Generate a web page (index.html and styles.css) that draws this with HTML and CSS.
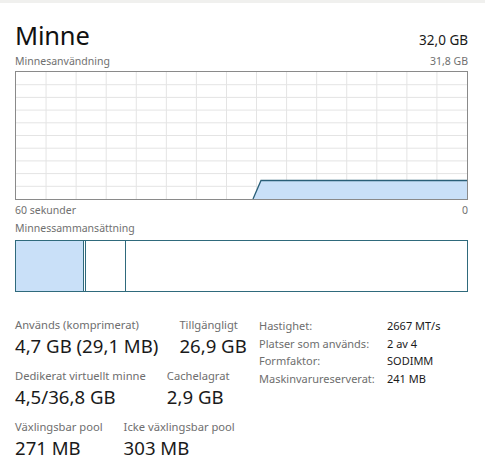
FILE: index.html
```html
<!DOCTYPE html>
<html lang="sv">
<head>
<meta charset="utf-8">
<link rel="stylesheet" href="styles.css">
</head>
<body>
<div class="topband"></div>
<main class="panel">
  <header class="head">
    <h1 class="title">Minne</h1>
    <span class="total">32,0 GB</span>
  </header>
  <div class="caption"><span>Minnesanvändning</span><span>31,8 GB</span></div>
  <div class="chart">
    <svg class="chart-svg" viewBox="0 0 451 127" preserveAspectRatio="none">
      <g class="grid">
        <line x1="30.07" y1="0" x2="30.07" y2="127"/>
        <line x1="60.13" y1="0" x2="60.13" y2="127"/>
        <line x1="90.2" y1="0" x2="90.2" y2="127"/>
        <line x1="120.27" y1="0" x2="120.27" y2="127"/>
        <line x1="150.33" y1="0" x2="150.33" y2="127"/>
        <line x1="180.4" y1="0" x2="180.4" y2="127"/>
        <line x1="210.47" y1="0" x2="210.47" y2="127"/>
        <line x1="240.53" y1="0" x2="240.53" y2="127"/>
        <line x1="270.6" y1="0" x2="270.6" y2="127"/>
        <line x1="300.67" y1="0" x2="300.67" y2="127"/>
        <line x1="330.73" y1="0" x2="330.73" y2="127"/>
        <line x1="360.8" y1="0" x2="360.8" y2="127"/>
        <line x1="390.87" y1="0" x2="390.87" y2="127"/>
        <line x1="420.93" y1="0" x2="420.93" y2="127"/>
        <line x1="0" y1="12.7" x2="451" y2="12.7"/>
        <line x1="0" y1="25.4" x2="451" y2="25.4"/>
        <line x1="0" y1="38.1" x2="451" y2="38.1"/>
        <line x1="0" y1="50.8" x2="451" y2="50.8"/>
        <line x1="0" y1="63.5" x2="451" y2="63.5"/>
        <line x1="0" y1="76.2" x2="451" y2="76.2"/>
        <line x1="0" y1="88.9" x2="451" y2="88.9"/>
        <line x1="0" y1="101.6" x2="451" y2="101.6"/>
        <line x1="0" y1="114.3" x2="451" y2="114.3"/>
      </g>
      <polygon class="area" points="237,127 245,108.5 451,108.5 451,127"/>
      <polyline class="trace" points="237,127 245,108.5 451,108.5"/>
    </svg>
  </div>
  <div class="caption under"><span>60 sekunder</span><span>0</span></div>
  <div class="caption comp-cap"><span>Minnessammansättning</span></div>
  <div class="composition">
    <div class="seg used"></div>
    <div class="seg modified"></div>
    <div class="seg rest"></div>
  </div>

  <section class="stats">
    <div class="stat-grid">
      <div class="stat-row">
        <div class="stat"><span class="lbl">Används (komprimerat)</span><span class="val">4,7 GB (29,1 MB)</span></div>
        <div class="stat"><span class="lbl">Tillgängligt</span><span class="val">26,9 GB</span></div>
      </div>
      <div class="stat-row">
        <div class="stat"><span class="lbl">Dedikerat virtuellt minne</span><span class="val">4,5/36,8 GB</span></div>
        <div class="stat"><span class="lbl">Cachelagrat</span><span class="val">2,9 GB</span></div>
      </div>
      <div class="stat-row">
        <div class="stat"><span class="lbl">Växlingsbar pool</span><span class="val">271 MB</span></div>
        <div class="stat"><span class="lbl">Icke växlingsbar pool</span><span class="val">303 MB</span></div>
      </div>
    </div>
    <dl class="specs">
      <dt>Hastighet:</dt><dd>2667 MT/s</dd>
      <dt>Platser som används:</dt><dd>2 av 4</dd>
      <dt>Formfaktor:</dt><dd>SODIMM</dd>
      <dt>Maskinvarureserverat:</dt><dd>241 MB</dd>
    </dl>
  </section>
</main>
</body>
</html>
```
FILE: styles.css
```css
html, body {
  margin: 0;
  padding: 0;
  background: #ffffff;
}
body {
  font-family: "Noto Sans", "Open Sans", sans-serif;
  color: #1a1a1a;
  width: 485px;
  height: 466px;
  overflow: hidden;
}
.topband {
  height: 3px;
  background: #f0f0ee;
}
.panel {
  padding: 0 17px 0 15px;
}
.head {
  display: flex;
  justify-content: space-between;
  align-items: baseline;
  height: 49px;
  padding-top: 20px;
  box-sizing: border-box;
}
.title {
  margin: 0;
  font-size: 25.5px;
  font-weight: 400;
  line-height: 1;
  color: #111;
  letter-spacing: -0.2px;
}
.total {
  font-size: 13.5px;
  color: #1a1a1a;
}
.caption {
  display: flex;
  justify-content: space-between;
  font-size: 10.5px;
  color: #707070;
  line-height: 14px;
  height: 19px;
  box-sizing: border-box;
  padding-top: 2px;
}
.chart {
  height: 129px;
  border: 1px solid #8a8a8a;
  box-sizing: border-box;
}
.chart-svg {
  display: block;
  width: 100%;
  height: 100%;
}
.grid line {
  stroke: #e4e4e4;
  stroke-width: 1;
}
.area {
  fill: #c9e0f8;
}
.trace {
  fill: none;
  stroke: #2a5f78;
  stroke-width: 1.3;
}
.caption.under {
  height: 19px;
  padding-top: 3px;
}
.caption.comp-cap {
  height: 21px;
  padding-top: 2px;
}
.composition {
  display: flex;
  height: 52px;
  border: 1px solid #2f6a7c;
  box-sizing: border-box;
}
.seg.used {
  width: 67px;
  background: #c9e0f8;
  border-right: 1px solid #2f6a7c;
}
.seg.modified {
  width: 39px;
  margin-left: 1px;
  border-left: 1px solid #2f6a7c;
  border-right: 1px solid #2f6a7c;
}
.seg.rest {
  flex: 1;
}
.stats {
  display: flex;
  margin-top: 25px;
}
.stat-grid {
  width: 244px;
  display: flex;
  flex-direction: column;
}
.stat-row {
  display: flex;
  gap: 21px;
  height: 51px;
}
.stat {
  display: flex;
  flex-direction: column;
}
.lbl {
  font-size: 11.2px;
  color: #6e6e6e;
  line-height: 16px;
}
.val {
  font-size: 18.6px;
  line-height: 26px;
  color: #1a1a1a;
}
.specs {
  margin: 0;
  display: grid;
  grid-template-columns: 128px auto;
  grid-auto-rows: 17.7px;
  font-size: 11px;
  line-height: 17.7px;
}
.specs dt {
  color: #6e6e6e;
}
.specs dd {
  margin: 0;
  color: #1a1a1a;
}
```
